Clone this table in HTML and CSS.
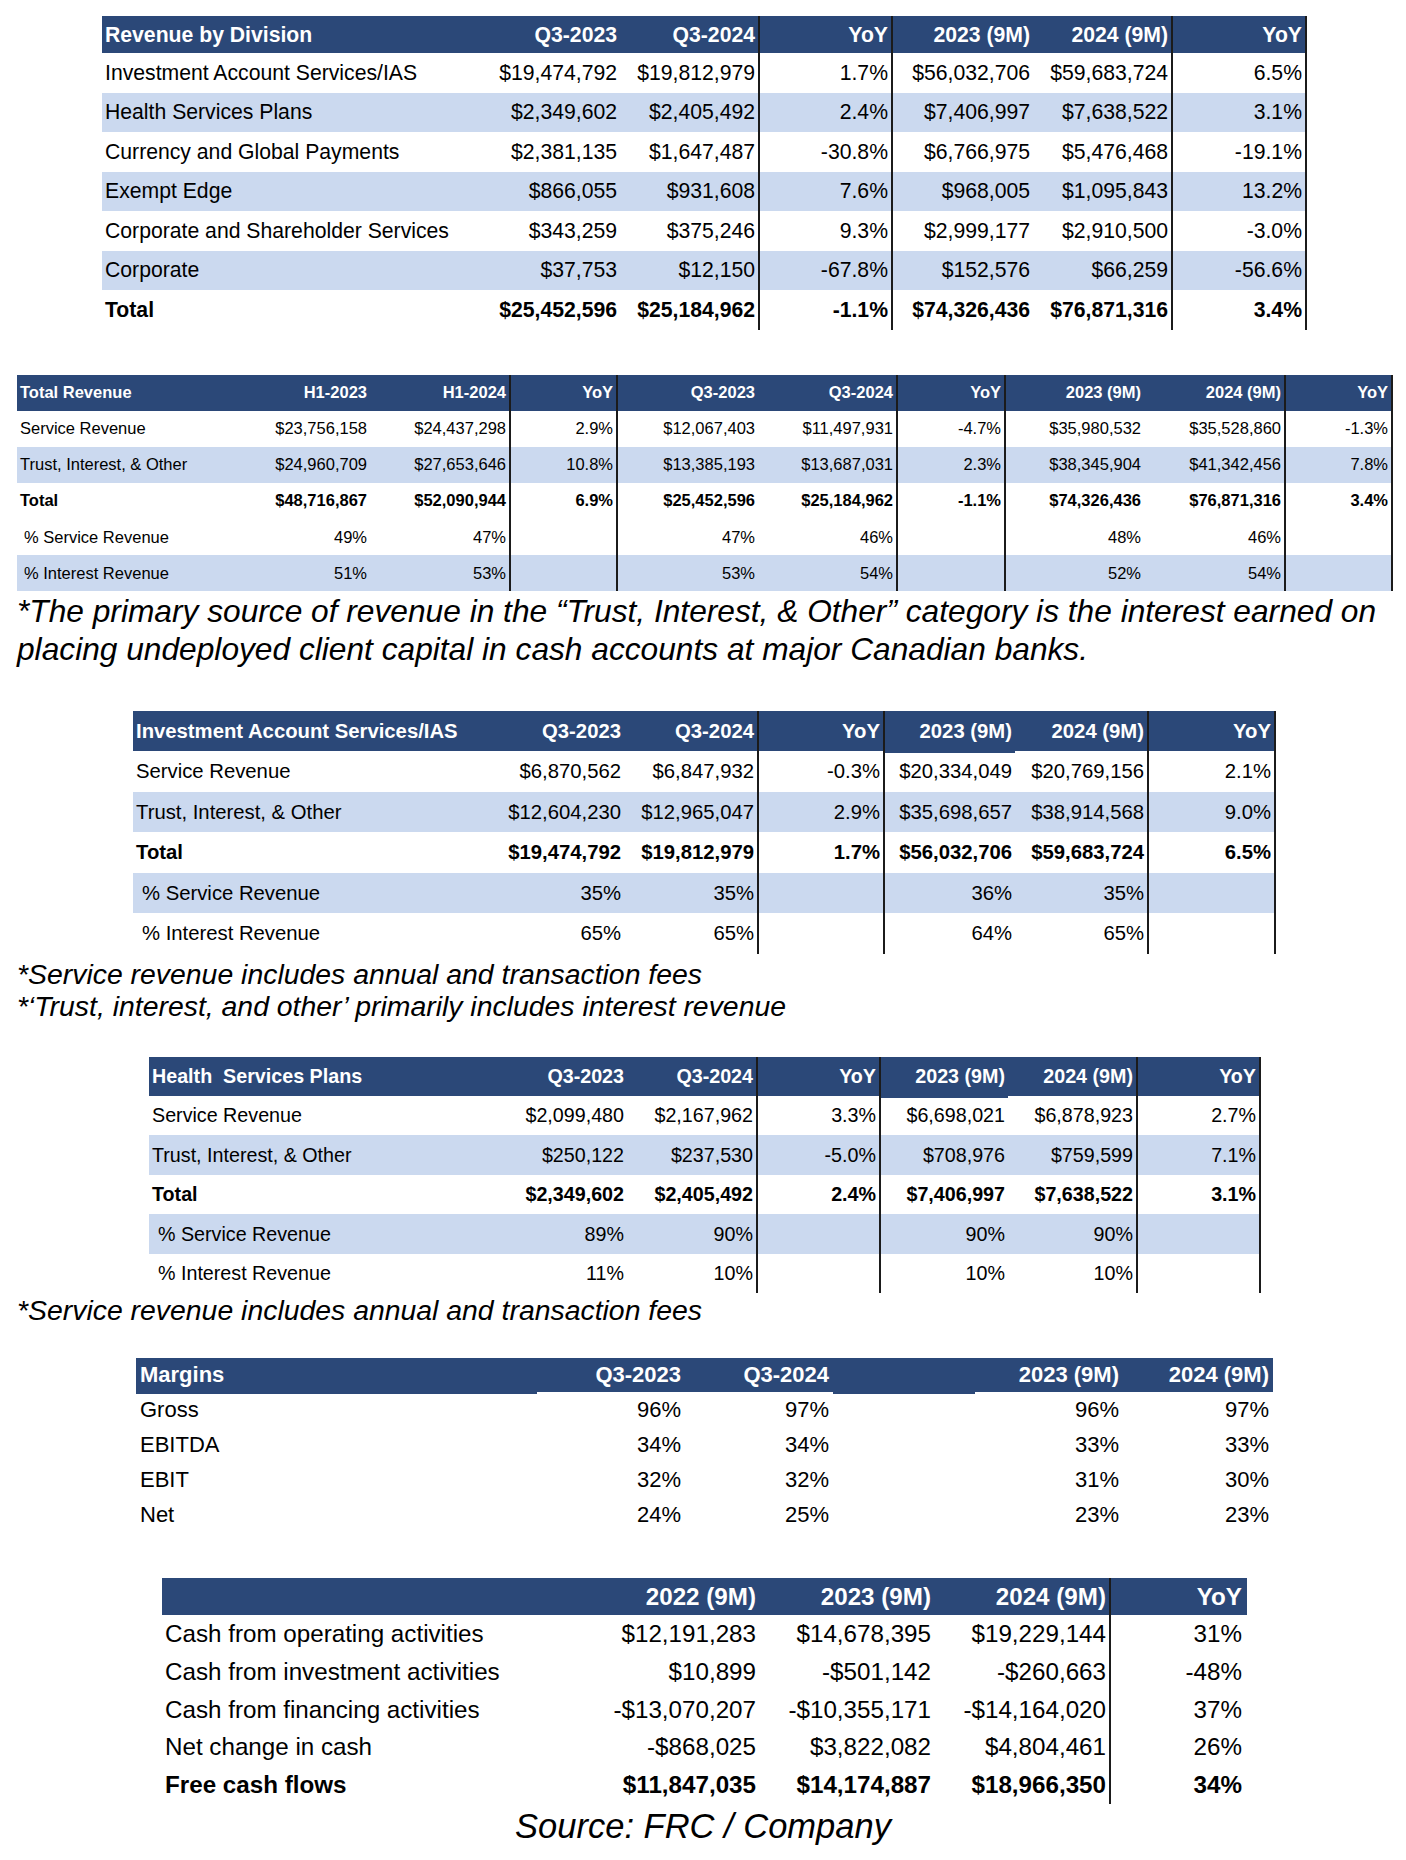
FILE: index.html
```html
<!DOCTYPE html>
<html>
<head>
<meta charset="utf-8">
<link rel="stylesheet" href="styles.css">
</head>
<body>
<div class="page">

<table class="tbl t1">
  <colgroup><col class="c-l"><col class="c-n"><col class="c-n"><col class="c-y"><col class="c-n2"><col class="c-n"><col class="c-y2"></colgroup>
  <thead>
    <tr><th class="lbl">Revenue by Division</th><th>Q3-2023</th><th class="vl">Q3-2024</th><th class="vl">YoY</th><th>2023 (9M)</th><th class="vl">2024 (9M)</th><th class="vl">YoY</th></tr>
  </thead>
  <tbody>
    <tr><td class="lbl">Investment Account Services/IAS</td><td>$19,474,792</td><td class="vl">$19,812,979</td><td class="vl">1.7%</td><td>$56,032,706</td><td class="vl">$59,683,724</td><td class="vl">6.5%</td></tr>
    <tr class="b"><td class="lbl">Health Services Plans</td><td>$2,349,602</td><td class="vl">$2,405,492</td><td class="vl">2.4%</td><td>$7,406,997</td><td class="vl">$7,638,522</td><td class="vl">3.1%</td></tr>
    <tr><td class="lbl">Currency and Global Payments</td><td>$2,381,135</td><td class="vl">$1,647,487</td><td class="vl">-30.8%</td><td>$6,766,975</td><td class="vl">$5,476,468</td><td class="vl">-19.1%</td></tr>
    <tr class="b"><td class="lbl">Exempt Edge</td><td>$866,055</td><td class="vl">$931,608</td><td class="vl">7.6%</td><td>$968,005</td><td class="vl">$1,095,843</td><td class="vl">13.2%</td></tr>
    <tr><td class="lbl">Corporate and Shareholder Services</td><td>$343,259</td><td class="vl">$375,246</td><td class="vl">9.3%</td><td>$2,999,177</td><td class="vl">$2,910,500</td><td class="vl">-3.0%</td></tr>
    <tr class="b"><td class="lbl">Corporate</td><td>$37,753</td><td class="vl">$12,150</td><td class="vl">-67.8%</td><td>$152,576</td><td class="vl">$66,259</td><td class="vl">-56.6%</td></tr>
    <tr class="tot"><td class="lbl">Total</td><td>$25,452,596</td><td class="vl">$25,184,962</td><td class="vl">-1.1%</td><td>$74,326,436</td><td class="vl">$76,871,316</td><td class="vl">3.4%</td></tr>
  </tbody>
</table>

<table class="tbl t2">
  <colgroup><col class="c-l"><col class="c-a"><col class="c-a"><col class="c-y"><col class="c-b"><col class="c-c"><col class="c-y3"><col class="c-c"><col class="c-b"><col class="c-y"></colgroup>
  <thead>
    <tr><th class="lbl">Total Revenue</th><th>H1-2023</th><th class="vl">H1-2024</th><th class="vl">YoY</th><th>Q3-2023</th><th class="vl">Q3-2024</th><th class="vl">YoY</th><th>2023 (9M)</th><th class="vl">2024 (9M)</th><th class="vl">YoY</th></tr>
  </thead>
  <tbody>
    <tr><td class="lbl">Service Revenue</td><td>$23,756,158</td><td class="vl">$24,437,298</td><td class="vl">2.9%</td><td>$12,067,403</td><td class="vl">$11,497,931</td><td class="vl">-4.7%</td><td>$35,980,532</td><td class="vl">$35,528,860</td><td class="vl">-1.3%</td></tr>
    <tr class="b"><td class="lbl">Trust, Interest, &amp; Other</td><td>$24,960,709</td><td class="vl">$27,653,646</td><td class="vl">10.8%</td><td>$13,385,193</td><td class="vl">$13,687,031</td><td class="vl">2.3%</td><td>$38,345,904</td><td class="vl">$41,342,456</td><td class="vl">7.8%</td></tr>
    <tr class="tot"><td class="lbl">Total</td><td>$48,716,867</td><td class="vl">$52,090,944</td><td class="vl">6.9%</td><td>$25,452,596</td><td class="vl">$25,184,962</td><td class="vl">-1.1%</td><td>$74,326,436</td><td class="vl">$76,871,316</td><td class="vl">3.4%</td></tr>
    <tr><td class="lbl ind">% Service Revenue</td><td>49%</td><td class="vl">47%</td><td class="vl"></td><td>47%</td><td class="vl">46%</td><td class="vl"></td><td>48%</td><td class="vl">46%</td><td class="vl"></td></tr>
    <tr class="b"><td class="lbl ind">% Interest Revenue</td><td>51%</td><td class="vl">53%</td><td class="vl"></td><td>53%</td><td class="vl">54%</td><td class="vl"></td><td>52%</td><td class="vl">54%</td><td class="vl"></td></tr>
  </tbody>
</table>

<p class="note note1">*The primary source of revenue in the “Trust, Interest, &amp; Other” category is the interest earned on<br>placing undeployed client capital in cash accounts at major Canadian banks.</p>

<table class="tbl t3">
  <colgroup><col class="c-l"><col class="c-n"><col class="c-n"><col class="c-y"><col class="c-n2"><col class="c-n3"><col class="c-y2"></colgroup>
  <thead>
    <tr><th class="lbl">Investment Account Services/IAS</th><th>Q3-2023</th><th class="vl">Q3-2024</th><th class="vl">YoY</th><th class="ext">2023 (9M)</th><th class="vl">2024 (9M)</th><th class="vl">YoY</th></tr>
  </thead>
  <tbody>
    <tr><td class="lbl">Service Revenue</td><td>$6,870,562</td><td class="vl">$6,847,932</td><td class="vl">-0.3%</td><td>$20,334,049</td><td class="vl">$20,769,156</td><td class="vl">2.1%</td></tr>
    <tr class="b"><td class="lbl">Trust, Interest, &amp; Other</td><td>$12,604,230</td><td class="vl">$12,965,047</td><td class="vl">2.9%</td><td>$35,698,657</td><td class="vl">$38,914,568</td><td class="vl">9.0%</td></tr>
    <tr class="tot"><td class="lbl">Total</td><td>$19,474,792</td><td class="vl">$19,812,979</td><td class="vl">1.7%</td><td>$56,032,706</td><td class="vl">$59,683,724</td><td class="vl">6.5%</td></tr>
    <tr class="b"><td class="lbl ind">% Service Revenue</td><td>35%</td><td class="vl">35%</td><td class="vl"></td><td>36%</td><td class="vl">35%</td><td class="vl"></td></tr>
    <tr><td class="lbl ind">% Interest Revenue</td><td>65%</td><td class="vl">65%</td><td class="vl"></td><td>64%</td><td class="vl">65%</td><td class="vl"></td></tr>
  </tbody>
</table>

<p class="note note2">*Service revenue includes annual and transaction fees<br>*‘Trust, interest, and other’ primarily includes interest revenue</p>

<table class="tbl t4">
  <colgroup><col class="c-l"><col class="c-n"><col class="c-n"><col class="c-y"><col class="c-n2"><col class="c-n3"><col class="c-y"></colgroup>
  <thead>
    <tr><th class="lbl">Health&nbsp; Services Plans</th><th>Q3-2023</th><th class="vl">Q3-2024</th><th class="vl">YoY</th><th class="ext">2023 (9M)</th><th class="vl">2024 (9M)</th><th class="vl">YoY</th></tr>
  </thead>
  <tbody>
    <tr><td class="lbl">Service Revenue</td><td>$2,099,480</td><td class="vl">$2,167,962</td><td class="vl">3.3%</td><td>$6,698,021</td><td class="vl">$6,878,923</td><td class="vl">2.7%</td></tr>
    <tr class="b"><td class="lbl">Trust, Interest, &amp; Other</td><td>$250,122</td><td class="vl">$237,530</td><td class="vl">-5.0%</td><td>$708,976</td><td class="vl">$759,599</td><td class="vl">7.1%</td></tr>
    <tr class="tot"><td class="lbl">Total</td><td>$2,349,602</td><td class="vl">$2,405,492</td><td class="vl">2.4%</td><td>$7,406,997</td><td class="vl">$7,638,522</td><td class="vl">3.1%</td></tr>
    <tr class="b"><td class="lbl ind">% Service Revenue</td><td>89%</td><td class="vl">90%</td><td class="vl"></td><td>90%</td><td class="vl">90%</td><td class="vl"></td></tr>
    <tr><td class="lbl ind">% Interest Revenue</td><td>11%</td><td class="vl">10%</td><td class="vl"></td><td>10%</td><td class="vl">10%</td><td class="vl"></td></tr>
  </tbody>
</table>

<p class="note note3">*Service revenue includes annual and transaction fees</p>

<table class="tbl t5">
  <colgroup><col class="c-l"><col class="c-n"><col class="c-n"><col class="c-g"><col class="c-n"><col class="c-n2"></colgroup>
  <thead>
    <tr><th class="lbl ext">Margins</th><th>Q3-2023</th><th>Q3-2024</th><th class="ext"></th><th>2023 (9M)</th><th>2024 (9M)</th></tr>
  </thead>
  <tbody>
    <tr><td class="lbl">Gross</td><td>96%</td><td>97%</td><td></td><td>96%</td><td>97%</td></tr>
    <tr><td class="lbl">EBITDA</td><td>34%</td><td>34%</td><td></td><td>33%</td><td>33%</td></tr>
    <tr><td class="lbl">EBIT</td><td>32%</td><td>32%</td><td></td><td>31%</td><td>30%</td></tr>
    <tr><td class="lbl">Net</td><td>24%</td><td>25%</td><td></td><td>23%</td><td>23%</td></tr>
  </tbody>
</table>

<table class="tbl t6">
  <colgroup><col class="c-l"><col class="c-n"><col class="c-n"><col class="c-n2"><col class="c-y"></colgroup>
  <thead>
    <tr><th class="lbl"></th><th>2022 (9M)</th><th>2023 (9M)</th><th class="vl">2024 (9M)</th><th class="yy">YoY</th></tr>
  </thead>
  <tbody>
    <tr><td class="lbl">Cash from operating activities</td><td>$12,191,283</td><td>$14,678,395</td><td class="vl">$19,229,144</td><td class="yy">31%</td></tr>
    <tr><td class="lbl">Cash from investment activities</td><td>$10,899</td><td>-$501,142</td><td class="vl">-$260,663</td><td class="yy">-48%</td></tr>
    <tr><td class="lbl">Cash from financing activities</td><td>-$13,070,207</td><td>-$10,355,171</td><td class="vl">-$14,164,020</td><td class="yy">37%</td></tr>
    <tr><td class="lbl">Net change in cash</td><td>-$868,025</td><td>$3,822,082</td><td class="vl">$4,804,461</td><td class="yy">26%</td></tr>
    <tr class="tot"><td class="lbl">Free cash flows</td><td>$11,847,035</td><td>$14,174,887</td><td class="vl">$18,966,350</td><td class="yy">34%</td></tr>
  </tbody>
</table>

<p class="source">Source: FRC / Company</p>

</div>
</body>
</html>
```

FILE: styles.css
```css
html, body {
  margin: 0;
  padding: 0;
  background: #ffffff;
}

.page {
  width: 1406px;
  padding-top: 16px;
  font-family: "Liberation Sans", Arial, sans-serif;
  color: #000;
}

.tbl {
  border-collapse: collapse;
  table-layout: fixed;
  border-spacing: 0;
}

.tbl th,
.tbl td {
  padding: 0 3px 0 3px;
  text-align: right;
  vertical-align: middle;
  white-space: nowrap;
  overflow: visible;
}

.tbl th {
  background: #2b4878;
  color: #ffffff;
  font-weight: bold;
}

.tbl .lbl {
  text-align: left;
}

.tbl tr.b td {
  background: #cbd9ef;
}

.tbl tr.tot td {
  font-weight: bold;
}

.tbl .vl {
  border-right: 2px solid #1b1b1b;
}

.tbl th.ext {
  box-shadow: 0 2px 0 #2b4878;
}

/* ---------- Table 1 ---------- */
.t1 {
  margin-left: 102px;
  width: 1204px;
  font-size: 21.2px;
}
.t1 .c-l { width: 379px; }
.t1 .c-n { width: 139px; }
.t1 .c-y { width: 133px; }
.t1 .c-n2 { width: 141px; }
.t1 .c-y2 { width: 134px; }
.t1 th { height: 37px; }
.t1 td { height: 39.5px; }

/* ---------- Table 2 ---------- */
.t2 {
  margin-top: 45.5px;
  margin-left: 17px;
  width: 1375px;
  font-size: 16.5px;
}
.t2 .c-l { width: 213px; }
.t2 .c-a { width: 140px; }
.t2 .c-y { width: 107px; }
.t2 .c-b { width: 141px; }
.t2 .c-c { width: 139px; }
.t2 .c-y3 { width: 108px; }
.t2 th { height: 35.5px; }
.t2 td { height: 36.2px; }
.t2 td.ind { padding-left: 7px; }

/* ---------- Notes ---------- */
.note {
  margin: 0;
  margin-left: 17px;
  font-style: italic;
  white-space: nowrap;
}
.note1 {
  margin-top: 1px;
  font-size: 31.7px;
  line-height: 38px;
}
.note2 {
  margin-top: 4px;
  font-size: 28.4px;
  line-height: 32px;
}
.note3 {
  margin-top: 1px;
  font-size: 28.4px;
  line-height: 32px;
}

/* ---------- Table 3 ---------- */
.t3 {
  margin-top: 43px;
  margin-left: 133px;
  width: 1142px;
  font-size: 20.3px;
}
.t3 .c-l { width: 357px; }
.t3 .c-n { width: 134px; }
.t3 .c-y { width: 126px; }
.t3 .c-n2 { width: 131px; }
.t3 .c-n3 { width: 133px; }
.t3 .c-y2 { width: 127px; }
.t3 th { height: 40px; }
.t3 td { height: 40.5px; }
.t3 td.ind { padding-left: 9px; }

/* ---------- Table 4 ---------- */
.t4 {
  margin-top: 35px;
  margin-left: 149px;
  width: 1111px;
  font-size: 19.7px;
}
.t4 .c-l { width: 348px; }
.t4 .c-n { width: 130px; }
.t4 .c-y { width: 123px; }
.t4 .c-n2 { width: 128px; }
.t4 .c-n3 { width: 129px; }
.t4 th { height: 39px; }
.t4 td { height: 39.5px; }
.t4 td.ind { padding-left: 9px; }

/* ---------- Table 5 ---------- */
.t5 {
  margin-top: 32px;
  margin-left: 136px;
  width: 1137px;
  font-size: 22px;
}
.t5 .c-l { width: 401px; }
.t5 .c-n { width: 148px; }
.t5 .c-g { width: 142px; }
.t5 .c-n2 { width: 150px; }
.t5 th { height: 34px; }
.t5 td { height: 35px; }
.t5 th, .t5 td { padding: 0 4px 0 4px; }

/* ---------- Table 6 ---------- */
.t6 {
  margin-top: 46px;
  margin-left: 162px;
  width: 1085px;
  font-size: 24.2px;
}
.t6 .c-l { width: 422px; }
.t6 .c-n { width: 175px; }
.t6 .c-n2 { width: 176px; }
.t6 .c-y { width: 137px; }
.t6 th { height: 37px; }
.t6 td { height: 37.7px; }
.t6 th, .t6 td { padding: 0 3px 0 3px; }
.t6 .yy { padding-right: 5px; }

/* ---------- Source ---------- */
.source {
  margin: 2px 0 0 0;
  font-size: 34.5px;
  line-height: 40px;
  font-style: italic;
  text-align: center;
}
```
